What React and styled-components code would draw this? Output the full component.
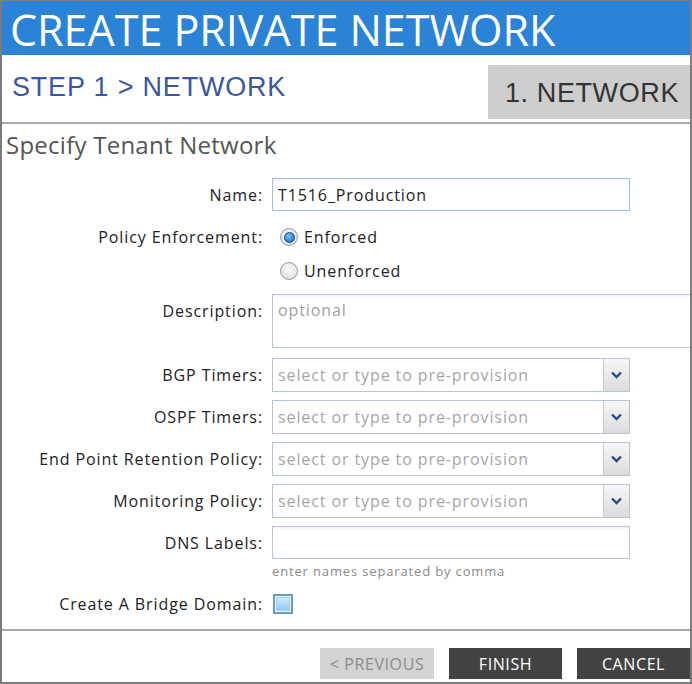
import React from "react";
import styled, { createGlobalStyle } from "styled-components";

const GlobalStyle = createGlobalStyle`
  html, body {
    margin: 0;
    padding: 0;
    background: #fff;
    overflow: hidden;
  }
  * {
    box-sizing: border-box;
  }
`;

const Frame = styled.div`
  width: 692px;
  height: 684px;
  display: flex;
  flex-direction: column;
  overflow: hidden;
  background: #fff;
  border-style: solid;
  border-color: #7b7b7b;
  border-width: 1px 2px 2px 2px;
  font-family: "Open Sans", "DejaVu Sans", sans-serif;
  letter-spacing: 0.9px;
`;

const Header = styled.div`
  height: 54px;
  flex: none;
  background: #2a83d6;
  padding: 3px 0 0 8px;
  display: flex;
  align-items: flex-start;
`;

const Title = styled.h1`
  margin: 0;
  color: #fff;
  font-family: "Open Sans", sans-serif;
  font-weight: 400;
  font-size: 43px;
  line-height: 52px;
  letter-spacing: 0;
  white-space: nowrap;
`;

const StepBar = styled.div`
  height: 69px;
  flex: none;
  display: flex;
  justify-content: space-between;
  align-items: flex-start;
  border-bottom: 2px solid #a9a9a9;
`;

const StepTitle = styled.div`
  padding: 16px 0 0 10px;
  color: #3b56a3;
  font-family: "Liberation Sans", Arial, sans-serif;
  font-size: 27px;
  line-height: 32px;
  letter-spacing: 0.8px;
`;

const StepTab = styled.div`
  margin-top: 10px;
  width: 202px;
  height: 54px;
  padding-left: 17px;
  background: #cdcdcd;
  color: #333;
  font-family: "Liberation Sans", Arial, sans-serif;
  font-size: 27px;
  line-height: 56px;
  letter-spacing: 0.6px;
  white-space: nowrap;
`;

const Body = styled.div`
  flex: 1;
  display: flex;
  flex-direction: column;
  border-bottom: 2px solid #a9a9a9;
`;

const SectionTitle = styled.div`
  padding: 5px 0 0 4px;
  color: #555;
  font-size: 24px;
  line-height: 31px;
  letter-spacing: 0.25px;
`;

const Form = styled.div`
  display: grid;
  grid-template-columns: 261px 1fr;
  column-gap: 9px;
  margin-top: 18px;
`;

const Label = styled.div`
  grid-column: 1;
  text-align: right;
  color: #222;
  font-size: 16px;
  line-height: 20px;
  align-self: ${(p) => (p.$top ? "start" : "center")};
  padding-top: ${(p) => (p.$top ? "7px" : "0")};
  margin-top: ${(p) => p.$mt || 0}px;
  white-space: nowrap;
`;

const Field = styled.div`
  grid-column: 2;
  display: flex;
  align-items: center;
  margin-top: ${(p) => p.$mt || 0}px;
  min-height: ${(p) => p.$h || 0}px;
`;

const TextBox = styled.div`
  width: ${(p) => p.$w || 358}px;
  flex: none;
  height: ${(p) => p.$h || 33}px;
  border: 1px solid ${(p) => (p.$focus ? "#9fc0e3" : "#b9c3d6")};
  background: #fff;
  padding: ${(p) => (p.$top ? "4px 5px" : "0 5px")};
  display: flex;
  align-items: ${(p) => (p.$top ? "flex-start" : "center")};
  font-size: 16px;
  color: ${(p) => (p.$muted ? "#a0a0a0" : "#222")};
  box-shadow: inset 0 2px 2px rgba(0, 0, 0, 0.04);
  white-space: nowrap;
  overflow: hidden;
`;

const Combo = styled.div`
  width: 358px;
  height: 34px;
  display: flex;
  border: 1px solid #b9c3d6;
  background: #fff;
`;

const ComboText = styled.div`
  flex: 1;
  padding-left: 5px;
  display: flex;
  align-items: center;
  color: #a6a6a6;
  font-size: 16px;
  white-space: nowrap;
  overflow: hidden;
`;

const ComboButton = styled.div`
  width: 26px;
  flex: none;
  display: flex;
  align-items: center;
  justify-content: center;
  border-left: 1px solid #c9ccd3;
  background: linear-gradient(#f6f6f6, #dcdcdc);
`;

const RadioOption = styled.label`
  display: flex;
  align-items: center;
  gap: 6px;
  padding-left: 8px;
  font-size: 16px;
  color: #222;
  height: 26px;
`;

const RadioDot = styled.span`
  width: 18px;
  height: 18px;
  border-radius: 50%;
  border: 1px solid #9a9a9a;
  background: radial-gradient(circle at 50% 40%, #fdfdfd, #d6d6d6);
  display: flex;
  align-items: center;
  justify-content: center;
  &::after {
    content: "";
    display: ${(p) => (p.$checked ? "block" : "none")};
    width: 9px;
    height: 9px;
    border-radius: 50%;
    background: radial-gradient(circle at 40% 35%, #7fc4f5, #0b5fb0);
    border: 1px solid #0a4f95;
  }
`;

const Hint = styled.div`
  grid-column: 2;
  margin-top: 3px;
  color: #8a8a8a;
  font-size: 13px;
  line-height: 18px;
  letter-spacing: 0.85px;
`;

const CheckBox = styled.span`
  margin-left: 1px;
  width: 20px;
  height: 20px;
  border: 2px solid #6a9ac6;
  background: #eaf5ff;
  display: flex;
  align-items: center;
  justify-content: center;
  &::after {
    content: "";
    width: 12px;
    height: 12px;
    border: 1px solid #a9d1f3;
    background: linear-gradient(#cfe9ff, #93c8f3);
  }
`;

const Footer = styled.div`
  flex: none;
  height: 51px;
  display: flex;
  justify-content: flex-end;
  align-items: flex-start;
  gap: 15px;
  padding-top: 17px;
`;

const Button = styled.button`
  width: ${(p) => p.$w || 113}px;
  height: 31px;
  border: none;
  padding: 0;
  font-family: "Open Sans", sans-serif;
  font-size: 16px;
  letter-spacing: 0.6px;
  background: ${(p) => (p.$disabled ? "#d3d3d3" : "#434343")};
  color: ${(p) => (p.$disabled ? "#8c8c8c" : "#fff")};
`;

const Chevron = () => (
  <svg width="11" height="8" viewBox="0 0 11 8">
    <path d="M1 1.5 L5.5 6 L10 1.5" fill="none" stroke="#2b4a8e" strokeWidth="2.4" />
  </svg>
);

const comboRows = ["BGP Timers:", "OSPF Timers:", "End Point Retention Policy:", "Monitoring Policy:"];

const App = () => {
  return (
    <Frame>
      <GlobalStyle />
      <Header>
        <Title>CREATE PRIVATE NETWORK</Title>
      </Header>
      <StepBar>
        <StepTitle>STEP 1 &gt; NETWORK</StepTitle>
        <StepTab>1. NETWORK</StepTab>
      </StepBar>
      <Body>
        <SectionTitle>Specify Tenant Network</SectionTitle>
        <Form>
          <Label>Name:</Label>
          <Field>
            <TextBox $focus>T1516_Production</TextBox>
          </Field>

          <Label $mt={13}>Policy Enforcement:</Label>
          <Field $mt={13}>
            <RadioOption>
              <RadioDot $checked />
              Enforced
            </RadioOption>
          </Field>
          <Field $mt={8}>
            <RadioOption>
              <RadioDot />
              Unenforced
            </RadioOption>
          </Field>

          <Label $top $mt={10}>Description:</Label>
          <Field $mt={10}>
            <TextBox $w={440} $h={54} $top $muted>optional</TextBox>
          </Field>

          {comboRows.map((label, i) => (
            <React.Fragment key={label}>
              <Label $mt={i === 0 ? 10 : 8}>{label}</Label>
              <Field $mt={i === 0 ? 10 : 8}>
                <Combo>
                  <ComboText>select or type to pre-provision</ComboText>
                  <ComboButton>
                    <Chevron />
                  </ComboButton>
                </Combo>
              </Field>
            </React.Fragment>
          ))}

          <Label $mt={8}>DNS Labels:</Label>
          <Field $mt={8}>
            <TextBox />
          </Field>
          <Hint>enter names separated by comma</Hint>

          <Label $mt={12}>Create A Bridge Domain:</Label>
          <Field $mt={12} $h={24}>
            <CheckBox />
          </Field>
        </Form>
      </Body>
      <Footer>
        <Button $disabled $w={114}>&lt; PREVIOUS</Button>
        <Button>FINISH</Button>
        <Button>CANCEL</Button>
      </Footer>
    </Frame>
  );
};

export default App;
